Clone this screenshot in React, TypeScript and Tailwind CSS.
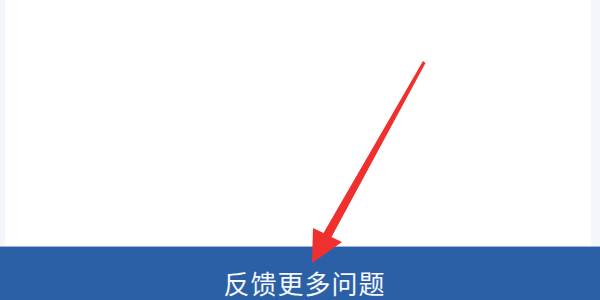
import React from 'react';

const Arrow: React.FC = () => (
  <svg
    className="pointer-events-none absolute inset-0"
    width={600}
    height={300}
    viewBox="0 0 600 300"
  >
    <polygon
      points="423,61 425.5,63 331.5,237 342,242 312,263 313,228 323.5,233"
      fill="#f0302e"
    />
  </svg>
);

export default function App() {
  return (
    <div
      className="relative flex h-[300px] w-[600px] flex-col overflow-hidden bg-white"
      style={{ fontFamily: '"Noto Sans CJK SC", "Noto Sans", sans-serif' }}
    >
      {/* page body */}
      <div className="flex-1 border-l-[5px] border-r-[9px] border-[#f3f6fa] bg-white" />

      {/* bottom action bar */}
      <div className="flex h-[54px] justify-center border-t border-[#9bb8dc] bg-[#2c60a6] pt-[21px] pl-[9px]">
        <span className="text-[26px] leading-[30px] tracking-[1px] text-[#f4f7fb]">反馈更多问题</span>
      </div>

      <Arrow />
    </div>
  );
}
